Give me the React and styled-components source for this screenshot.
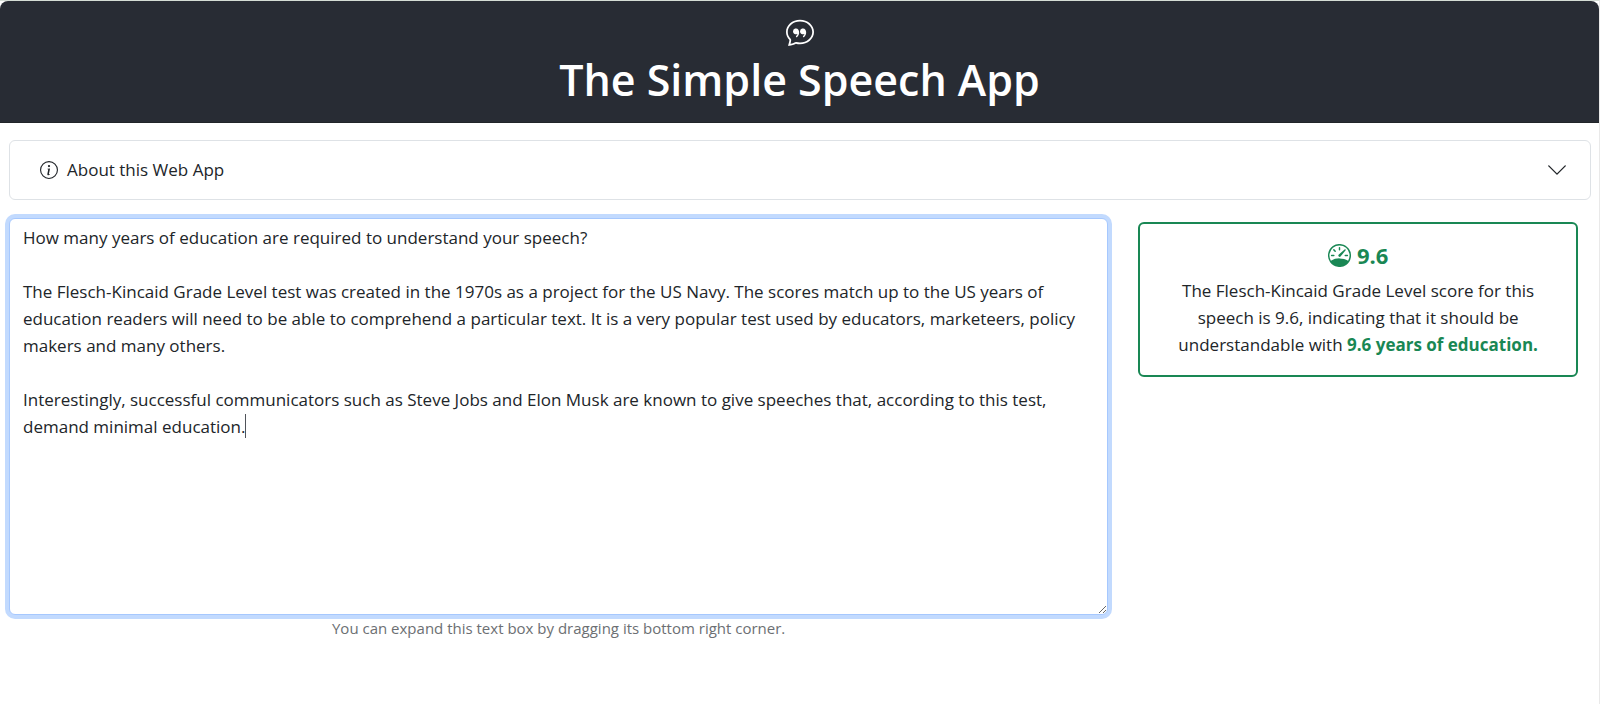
import React, { useEffect, useRef, useState } from "react";
import styled, { createGlobalStyle } from "styled-components";
import { BsChatQuote, BsChevronDown, BsInfoCircle, BsSpeedometer } from "react-icons/bs";

const GlobalStyle = createGlobalStyle`
  *, *::before, *::after { box-sizing: border-box; }
  body {
    margin: 0;
    background: #fff;
    color: #212529;
    font-family: "Segoe UI", "Open Sans", "Noto Sans", sans-serif;
    font-size: 17px;
    line-height: 27px;
  }
`;

const Page = styled.div`
  min-height: 100vh;
  border: solid #e9e9e9;
  border-width: 1px 1px 0 0;
  border-top-color: #d5ddd5;
`;

const Header = styled.header`
  display: flex;
  flex-direction: column;
  align-items: center;
  gap: 8px;
  padding: 17px 16px 16px;
  border-bottom: 1px solid #212529;
  border-radius: 8px 8px 0 0;
  background: #282c34;
  color: #fff;
`;

const Title = styled.h1`
  margin: 0;
  font-size: 43px;
  font-weight: 600;
  line-height: 52px;
  text-align: center;
`;

const Main = styled.main`
  display: flex;
  flex-direction: column;
  gap: 18px;
  padding: 17px 8px 17px 9px;
`;

const AboutButton = styled.button`
  display: flex;
  align-items: center;
  gap: 9px;
  width: 100%;
  padding: 15px 22px 16px 30px;
  border: 1px solid #dee2e6;
  border-radius: 6px;
  background: #fff;
  color: inherit;
  font: inherit;
  text-align: left;
`;

const AboutLabel = styled.span`
  flex: 1;
`;

const Columns = styled.div`
  display: grid;
  grid-template-columns: minmax(0, 5fr) minmax(0, 2fr);
  align-items: start;
  gap: 30px;
  padding-right: 13px;
`;

const Editor = styled.div`
  position: relative;
  display: flex;
  flex-direction: column;
`;

const SpeechBox = styled.textarea`
  display: block;
  width: 100%;
  height: 397px;
  min-height: 80px;
  padding: 5px 13px;
  border: 1px solid #dee2e6;
  border-radius: 6px;
  background: #fff;
  color: inherit;
  font: inherit;
  resize: vertical;
  caret-color: transparent;

  &:focus {
    border-color: #a6c8fe;
    outline: 0;
    box-shadow: 0 0 0 4px #c2dafe;
  }
`;

const Caret = styled.span`
  position: absolute;
  top: 196px;
  left: 236px;
  width: 1px;
  height: 24px;
  background: #50545a;
  pointer-events: none;
`;

const Hint = styled.label`
  color: #6c6f73;
  font-size: 15px;
  text-align: center;
`;

const ScoreCard = styled.section`
  margin-top: 4px;
  padding: 18px 30px 17px;
  border: 2px solid #198754;
  border-radius: 6px;
  text-align: center;
`;

const Score = styled.h2`
  display: flex;
  align-items: center;
  justify-content: center;
  gap: 6px;
  margin: 0 0 8px;
  color: #198754;
  font-size: 22px;
  font-weight: 700;
  line-height: 27px;
`;

const ScoreText = styled.p`
  margin: 0;
`;

const Years = styled.strong`
  color: #198754;
  font-weight: 700;
`;

const SPEECH = `How many years of education are required to understand your speech?

The Flesch-Kincaid Grade Level test was created in the 1970s as a project for the US Navy. The scores match up to the US years of education readers will need to be able to comprehend a particular text. It is a very popular test used by educators, marketeers, policy makers and many others.

Interestingly, successful communicators such as Steve Jobs and Elon Musk are known to give speeches that, according to this test, demand minimal education.`;

export default function App() {
  const [speech, setSpeech] = useState(SPEECH);
  const box = useRef(null);

  useEffect(() => {
    box.current.focus();
    box.current.setSelectionRange(SPEECH.length, SPEECH.length);
  }, []);

  return (
    <Page>
      <GlobalStyle />
      <Header>
        <BsChatQuote size={28} aria-hidden="true" />
        <Title>The Simple Speech App</Title>
      </Header>
      <Main>
        <AboutButton type="button" aria-expanded="false">
          <BsInfoCircle size={18} aria-hidden="true" />
          <AboutLabel>About this Web App</AboutLabel>
          <BsChevronDown size={22} aria-hidden="true" />
        </AboutButton>
        <Columns>
          <Editor>
            <SpeechBox
              id="speech"
              ref={box}
              spellCheck={false}
              value={speech}
              onChange={(event) => setSpeech(event.target.value)}
            />
            <Caret aria-hidden="true" />
            <Hint htmlFor="speech">
              You can expand this text box by dragging its bottom right corner.
            </Hint>
          </Editor>
          <ScoreCard>
            <Score>
              <BsSpeedometer size={23} aria-hidden="true" />
              9.6
            </Score>
            <ScoreText>
              The Flesch-Kincaid Grade Level score for this speech is 9.6, indicating that it
              should be understandable with <Years>9.6 years of education.</Years>
            </ScoreText>
          </ScoreCard>
        </Columns>
      </Main>
    </Page>
  );
}
